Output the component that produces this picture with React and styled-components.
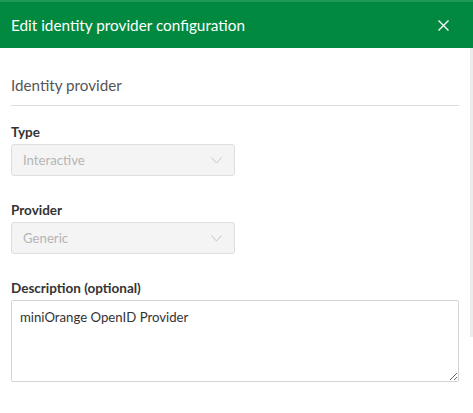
import styled, { createGlobalStyle } from "styled-components";

const GlobalStyle = createGlobalStyle`
  html, body {
    margin: 0;
    padding: 0;
    background: #fff;
  }
  body {
    font-family: "Lato", "Noto Sans", sans-serif;
  }
  * {
    box-sizing: border-box;
  }
`;

const Panel = styled.div`
  position: relative;
  width: 473px;
  height: 413px;
  background: #fff;
  overflow: hidden;
`;

const Header = styled.header`
  display: flex;
  align-items: center;
  justify-content: space-between;
  height: 48px;
  padding: 0 20px 0 11px;
  background-color: #00893f;
  border-top: 2px solid #1f9a55;
`;

const Title = styled.h1`
  margin: 0;
  font-size: 15.3px;
  font-weight: 400;
  color: #fff;
`;

const CloseButton = styled.button`
  display: flex;
  align-items: center;
  justify-content: center;
  width: 20px;
  height: 20px;
  padding: 0;
  border: none;
  background: none;
  color: #fff;
  cursor: pointer;
`;

const Body = styled.div`
  padding: 28px 14px 0 11px;
`;

const SectionTitle = styled.h2`
  margin: 0;
  padding-bottom: 11px;
  font-size: 15.2px;
  font-weight: 400;
  color: #555;
  border-bottom: 1px solid #dcdcdc;
`;

const Field = styled.div`
  display: flex;
  flex-direction: column;
  margin-top: ${(p) => p.$top}px;
`;

const Label = styled.label`
  font-size: 13.5px;
  font-weight: 700;
  color: #333;
  margin-bottom: 3px;
  line-height: 17px;
`;

const Select = styled.div`
  display: flex;
  align-items: center;
  justify-content: space-between;
  width: 224px;
  height: 32px;
  padding: 0 12px 0 11px;
  background: #f4f4f4;
  border: 1px solid #dedede;
  border-radius: 3px;
  font-size: 13.2px;
  color: #b4b4b4;
`;

const TextArea = styled.textarea`
  width: 100%;
  height: 82px;
  padding: 8px 8px;
  border: 1px solid #d4d4d4;
  border-radius: 2px;
  font-family: "Lato", "Noto Sans", sans-serif;
  font-size: 13.2px;
  color: #333;
  resize: vertical;
  outline: none;
`;

const ScrollThumb = styled.div`
  position: absolute;
  top: 48px;
  right: 0;
  width: 3px;
  height: 289px;
  background: #ececec;
`;

const Chevron = () => (
  <svg width="11" height="7" viewBox="0 0 11 7" fill="none">
    <path d="M0.5 0.5 L5.5 6 L10.5 0.5" stroke="#c4c4c4" strokeWidth="1" />
  </svg>
);

const App = () => {
  return (
    <Panel>
      <GlobalStyle />
      <Header>
        <Title>Edit identity provider configuration</Title>
        <CloseButton aria-label="Close">
          <svg width="11" height="11" viewBox="0 0 11 11">
            <path d="M0.5 0.5 L10.5 10.5 M10.5 0.5 L0.5 10.5" stroke="#fff" strokeWidth="1.4" />
          </svg>
        </CloseButton>
      </Header>
      <Body>
        <SectionTitle>Identity provider</SectionTitle>
        <Field $top={18}>
          <Label>Type</Label>
          <Select>
            Interactive
            <Chevron />
          </Select>
        </Field>
        <Field $top={26}>
          <Label>Provider</Label>
          <Select>
            Generic
            <Chevron />
          </Select>
        </Field>
        <Field $top={26}>
          <Label>Description (optional)</Label>
          <TextArea defaultValue="miniOrange OpenID Provider" />
        </Field>
      </Body>
      <ScrollThumb />
    </Panel>
  );
};

export default App;
